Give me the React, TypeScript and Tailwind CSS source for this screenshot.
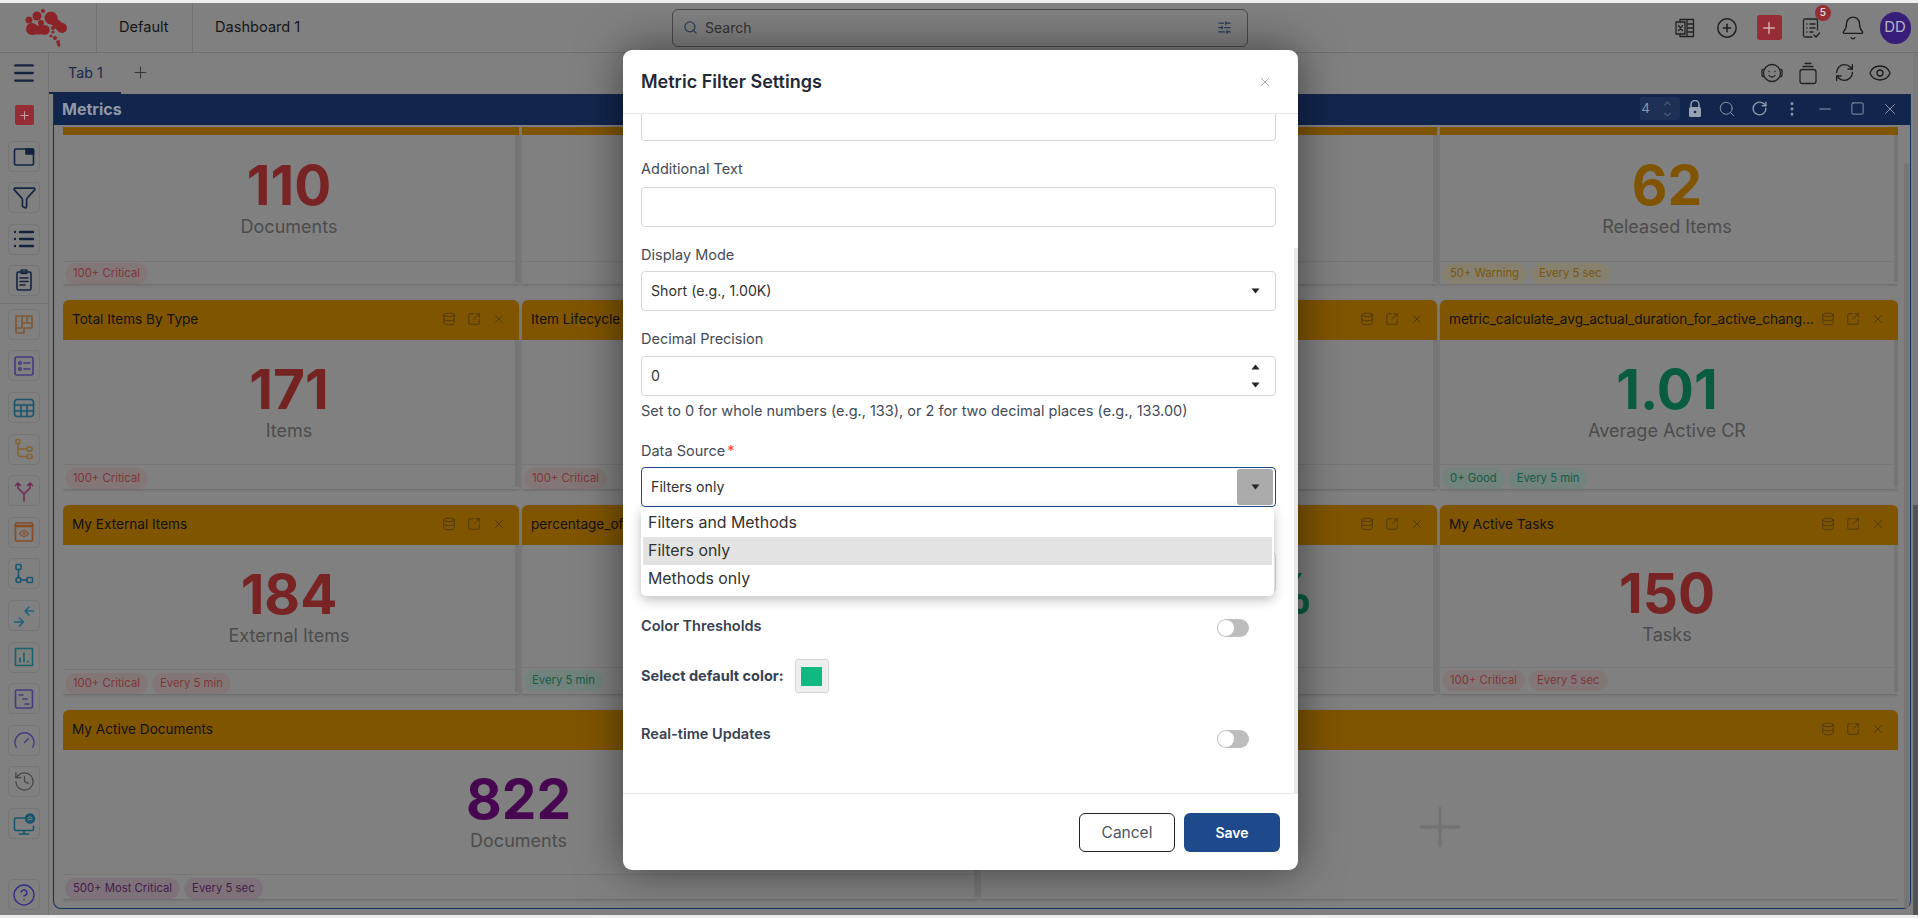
import React from "react";
import { Search, SlidersHorizontal, CirclePlus, Bell, Plus, RefreshCw, Eye, ChevronUp, ChevronDown, RotateCw, EllipsisVertical, Minus, Square, X, Database, SquareArrowOutUpRight, Gauge, History, CircleHelp, Menu, Funnel, List } from "lucide-react";

type IconProps = { c: string; children: React.ReactNode; size?: number };
const G = ({ c, children, size = 24 }: IconProps) => (
  <svg width={size} height={size} viewBox="0 0 24 24" fill="none" stroke={c} strokeWidth="1.6" strokeLinecap="round" strokeLinejoin="round">{children}</svg>
);

const NAVY = "#14233f";
const ORG = "#7e5733";
const PUR = "#473a80";
const TEAL = "#19566e";

const sideTop: React.ReactNode[] = [
  <G c={NAVY}><rect x="2.5" y="4" width="19" height="16" rx="1.5" /><rect x="14" y="4" width="7.5" height="5" fill={NAVY} /></G>,
  <Funnel size={25} color={NAVY} strokeWidth={1.6} />,
  <List size={24} color={NAVY} strokeWidth={2.4} />,
  <G c={NAVY}><rect x="5" y="4" width="14" height="18" rx="1.5" /><rect x="9" y="2" width="6" height="3.5" rx="1" /><path d="M8 10h8M8 13.5h8M8 17h5" /></G>,
];

const sideBottom: React.ReactNode[] = [
  <G c={ORG}><path d="M4 4h16v12h-8v5H5a1 1 0 0 1-1-1z" /><path d="M10 4v12H4M10 11h10M15 4v7" /></G>,
  <G c={PUR}><rect x="3" y="3" width="18" height="18" rx="2" /><circle cx="8" cy="9" r="1.3" /><circle cx="8" cy="15" r="1.3" /><path d="M12 9h6M12 15h6" /></G>,
  <G c={TEAL}><rect x="2.5" y="3.5" width="19" height="17" rx="3" /><path d="M2.5 9h19M2.5 15h19M9 9v11.5M15 9v11.5" /></G>,
  <G c="#84632f"><rect x="4" y="2.5" width="4" height="4" rx="1" /><rect x="15" y="10" width="5" height="4" rx="1" /><rect x="15" y="17.5" width="5" height="4" rx="1" /><path d="M6 6.5V17a2.500 2.500 0 0 0 2.500 2.500H15M6 12h9" /></G>,
  <G c="#722a52"><path d="M12 22v-7L6 9V4M12 15l6-6V4M3.500 6.500 6 4l2.500 2.500M15.500 6.500 18 4l2.500 2.500" /></G>,
  <G c="#884b25"><rect x="3.500" y="3" width="17" height="18" rx="1" /><path d="M3.500 6h17" strokeWidth="2.600" /><path d="M7.500 13.500s2-3 4.500-3 4.500 3 4.500 3-2 3-4.500 3-4.500-3-4.500-3z" strokeWidth="1.200" /><circle cx="12" cy="13.500" r="1" strokeWidth="1" /></G>,
  <G c={TEAL}><rect x="4" y="2.500" width="5" height="5" rx="1" /><circle cx="6.500" cy="18" r="2.500" /><rect x="15" y="15.500" width="5.500" height="5" rx="1" /><path d="M6.500 7.500v8M9 18h6" /></G>,
  <G c="#1f627f"><path d="M2.500 18H11M7.500 14l4 4-4 4M21.500 7H13M17 3l-4 4 4 4" /></G>,
  <G c="#19626a"><rect x="3.500" y="3.500" width="17" height="17" /><path d="M8 17v-4M12 17V8M16 17v-1" /></G>,
  <G c={PUR}><rect x="3.500" y="3" width="17" height="18" rx="1.500" /><path d="M7 8h4M11 12h4M13 17h4" /></G>,
  <Gauge size={23} color={PUR} strokeWidth={1.5} />,
  <History size={23} color="#444" strokeWidth={1.3} />,
  <G c={TEAL}><path d="M15 6H4a1.500 1.500 0 0 0-1.500 1.500V17A1.500 1.500 0 0 0 4 18.500h16a1.500 1.500 0 0 0 1.500-1.500v-3M12 18.500V22M7.500 22h9" /><circle cx="18" cy="6.500" r="4.500" fill="#19566e" /><path d="M16 6l2-1.500 2 1.500M16 8l2-1 2 1" stroke="#808080" strokeWidth="1" /></G>,
];

type Tone = "red" | "green" | "orange" | "purple";
const toneClass: Record<Tone, string> = {
  red: "bg-[#827676] text-[#803636]",
  green: "bg-[#72827d] text-[#145d46]",
  orange: "bg-[#86806f] text-[#7a570e]",
  purple: "bg-[#7d727a] text-[#471a4a]",
};

type Card = {
  title?: string;
  value?: string;
  label?: string;
  color?: string;
  tone?: Tone;
  badges?: string[];
  footer?: string;
  span?: boolean;
  plus?: boolean;
  noBar?: boolean;
  up?: boolean;
};

const cards: Card[] = [
  { value: "110", label: "Documents", color: "text-[#782424]", tone: "red", badges: ["100+ Critical"], footer: "h-[23px]" },
  { footer: "h-[23px]" },
  { footer: "h-[23px]" },
  { value: "62", label: "Released Items", color: "text-[#815500]", tone: "orange", badges: ["50+ Warning", "Every 5 sec"], footer: "h-[23px]" },
  { title: "Total Items By Type", value: "171", label: "Items", color: "text-[#742222]", tone: "red", badges: ["100+ Critical"] },
  { title: "Item Lifecycle", tone: "red", badges: ["100+ Critical"] },
  {},
  { title: "metric_calculate_avg_actual_duration_for_active_change_requests", value: "1.01", label: "Average Active CR", color: "text-[#095c3f]", tone: "green", badges: ["0+ Good", "Every 5 min"] },
  { title: "My External Items", value: "184", label: "External Items", color: "text-[#782424]", tone: "red", badges: ["100+ Critical", "Every 5 min"] },
  { title: "percentage_of_items", tone: "green", badges: ["Every 5 min"], up: true },
  { value: "33.33%", color: "text-[#095c3f]", up: true },
  { title: "My Active Tasks", value: "150", label: "Tasks", color: "text-[#782424]", tone: "red", badges: ["100+ Critical", "Every 5 sec"], up: true },
  { title: "My Active Documents", value: "822", label: "Documents", color: "text-[#460750]", tone: "purple", badges: ["500+ Most Critical", "Every 5 sec"], span: true },
  { span: true, plus: true, noBar: true },
];

function MetricCard({ card }: { card: Card }) {
  const footerH = card.footer ?? (card.up ? "h-[27px] pb-[3px]" : "h-[25px]");
  return (
    <div className={`flex h-[189px] flex-col overflow-hidden rounded-t-md shadow-[0_1px_3px_rgba(0,0,0,0.2)] ${card.span ? "col-span-2" : ""}`}>
      <div className="flex h-[40px] shrink-0 items-center bg-[#805500] pb-[2px] pl-[9px] pr-[13px] text-[13.600px] text-[#111]">
        <span className="min-w-0 flex-1 truncate">{card.title}</span>
        <div className="ml-[2px] flex w-[64px] shrink-0 items-center justify-between text-[#4a3710]">
          <Database size={14} strokeWidth={1.5} />
          <SquareArrowOutUpRight size={14} strokeWidth={1.5} />
          <X size={14} strokeWidth={1.5} />
        </div>
      </div>
      <div className="flex min-h-0 flex-1">
        <div className="flex min-w-0 flex-1 flex-col">
          <div className="flex min-h-0 flex-1 flex-col items-center justify-center">
            {card.plus ? (
              <svg width="40" height="40" viewBox="0 0 40 40" className="mt-[5px]" stroke="#727272" strokeWidth="3"><path d="M20 0v40M0 20h40" /></svg>
            ) : (
              <>
                <div className={`h-[60px] text-[55px] font-bold leading-[55px] ${card.color ?? ""}`}>{card.value}</div>
                <div className="h-[20px] text-[18px] leading-[18px] text-[#4c4c4c]">{card.label}</div>
              </>
            )}
          </div>
          {!card.plus && (
            <div className={`flex shrink-0 items-end gap-[4px] border-t border-[#767676] pl-[2px] ${footerH}`}>
              {card.badges?.map((b) => (
                <span key={b} className={`flex h-[21px] items-center rounded-full px-[8px] text-[11.300px] ${toneClass[card.tone ?? "red"]}`}>{b}</span>
              ))}
            </div>
          )}
        </div>
        {!card.noBar && <div className="mb-[2px] w-[4px] shrink-0 bg-[#757575]" />}
      </div>
    </div>
  );
}

const Label = ({ children, className = "" }: { children: React.ReactNode; className?: string }) => (
  <div className={`h-[20px] text-[14.500px] leading-[20px] ${className}`}>{children}</div>
);

const Caret = () => <svg width="9" height="6" viewBox="0 0 9 6"><path d="M0.500 0.500h8L4.500 5.500z" fill="#222" /></svg>;
const Toggle = ({ className = "" }: { className?: string }) => (
  <div className={`flex h-[18px] w-[32px] shrink-0 items-center rounded-full bg-[#bdbdbd] pl-[1px] ${className}`}>
    <div className="h-[16px] w-[16px] rounded-full bg-white" />
  </div>
);

const Field = ({ children, className = "" }: { children?: React.ReactNode; className?: string }) => (
  <div className={`flex h-[40px] items-center rounded-[4px] border bg-white pl-[9px] text-[14.200px] text-[#333] ${className}`}>{children}</div>
);

const GRAY = "border-[#d4d6da] pr-[15px]";
const LBL = "text-[#434b58]";
const STRONG = "text-[#374151]";

function Modal() {
  return (
    <div className="absolute left-[623px] top-[50px] flex h-[820px] w-[675px] flex-col overflow-hidden rounded-[9px] bg-white shadow-[0_0_45px_rgba(0,0,0,0.5)]">
      <div className="flex h-[64px] shrink-0 items-center justify-between border-b border-[#e5e7eb] pl-[18px] pr-[26px]">
        <span className="text-[18px] font-semibold text-[#1f2937]">Metric Filter Settings</span>
        <X size={14} color="#9ca3af" strokeWidth={1.500} />
      </div>
      <div className="relative flex min-h-0 flex-1 overflow-hidden border-b border-[#e5e7eb]">
        <div className="min-w-0 flex-1 pl-[18px] pr-[18px]">
          <Field className={`-mt-[13px] ${GRAY}`} />
          <Label className={`mt-[18px] ${LBL}`}>Additional Text</Label>
          <Field className={`mt-[8px] ${GRAY}`} />
          <Label className={`mt-[18px] ${LBL}`}>Display Mode</Label>
          <Field className={`mt-[6px] justify-between ${GRAY}`}>
            <span>Short (e.g., 1.00K)</span>
            <Caret />
          </Field>
          <Label className={`mt-[18px] ${LBL}`}>Decimal Precision</Label>
          <Field className={`mt-[7px] justify-between ${GRAY}`}>
            <span>0</span>
            <div className="flex flex-col gap-[12px]">
              <div className="rotate-180"><Caret /></div>
              <Caret />
            </div>
          </Field>
          <Label className={`mt-[5px] whitespace-nowrap ${LBL}`}>Set to 0 for whole numbers (e.g., 133), or 2 for two decimal places (e.g., 133.00)</Label>
          <Label className={`mt-[20px] ${LBL}`}>Data Source<span className="ml-[2px] text-[#ef4444]">*</span></Label>
          <Field className="mt-[6px] justify-between border-[#1e4a8c] pr-[2px]">
            <span>Filters only</span>
            <div className="flex h-[36px] w-[36px] items-center justify-center rounded-[3px] bg-[#ababab]"><Caret /></div>
          </Field>
          <Field className={`mt-[45px] ${GRAY}`} />
          <div className="mt-[25px] flex items-start justify-between pr-[27px]">
            <Label className={`-translate-y-[1px] font-semibold ${STRONG}`}>Color Thresholds</Label>
            <Toggle className="mt-[2px]" />
          </div>
          <div className="mt-[22px] flex items-center gap-[11px]">
            <Label className={`font-bold ${STRONG}`}>Select default color:</Label>
            <div className="flex h-[34px] w-[34px] items-center justify-center rounded-[3px] border border-[#d4d4d4] bg-[#efefef]">
              <div className="h-[19px] w-[21px] bg-[#10b981]" />
            </div>
          </div>
          <div className="mt-[31px] flex items-start justify-between pr-[27px]">
            <Label className={`font-semibold ${STRONG}`}>Real-time Updates</Label>
            <Toggle className="mt-[6px]" />
          </div>
        </div>
        <div className="mt-[134px] w-[4px] shrink-0 bg-[#e8e8e8]" />
        <div className="absolute left-[18px] top-[393px] h-[89px] w-[633px] rounded-[5px] bg-white p-[2px] text-[15.900px] text-[#333] shadow-[0_4px_12px_rgba(0,0,0,0.25)]">
          <div className="flex h-[28px] items-center pl-[5px]">Filters and Methods</div>
          <div className="flex h-[28px] items-center bg-[#e3e3e3] pl-[5px]">Filters only</div>
          <div className="flex h-[28px] items-center pl-[5px]">Methods only</div>
        </div>
      </div>
      <div className="flex h-[76px] shrink-0 items-start justify-end gap-[9px] pr-[18px] pt-[19px]">
        <button className="h-[39px] w-[96px] rounded-[6px] border border-[#222] text-[15.500px] text-[#4b5563]">Cancel</button>
        <button className="h-[39px] w-[96px] rounded-[6px] bg-[#1e4a8c] text-[14px] font-semibold text-white">Save</button>
      </div>
    </div>
  );
}

export default function App() {
  return (
    <div className="relative h-[918px] w-full overflow-hidden bg-[#eeeeee] pb-[3px] pt-[3px] font-['Inter',sans-serif]">
      <div className="flex h-[912px] flex-col bg-[#808080]">
        <header className="flex h-[50px] shrink-0 items-center border-b border-[#6f6f6f] text-[14.600px] text-[#161616]">
          <div className="flex h-full w-[97px] shrink-0 items-center justify-center border-r border-[#727272]">
            <svg width="56" height="46" viewBox="20 5 56 46" fill="#8a2428">
              <circle cx="51" cy="18" r="6.500" /><circle cx="62" cy="28" r="5" /><path d="M47 20l5-5 13 10-7 6z" /><circle cx="32" cy="29" r="6" /><circle cx="45" cy="30" r="4.800" /><path d="M32 25.500h13v9H32z" /><circle cx="29" cy="20" r="3.500" /><circle cx="37" cy="16" r="4.500" /><circle cx="41" cy="23" r="3" /><circle cx="43" cy="11" r="2" /><circle cx="53" cy="28" r="2" /><circle cx="53" cy="32" r="1.600" /><circle cx="51" cy="36" r="1.500" /><circle cx="55" cy="38" r="2" /><path d="M56 41l3.500-1 1 6-2.500 1z" />
            </svg>
          </div>
          <div className="flex h-full w-[96px] shrink-0 items-center border-r border-[#727272] pl-[22px]">Default</div>
          <div className="flex h-full w-[479px] shrink-0 items-center pl-[22px]">Dashboard 1</div>
          <div className="flex h-[38px] w-[576px] shrink-0 items-center rounded-[6px] border border-[#4a4a4a] pl-[10px] pr-[15px] text-[14px] text-[#333]">
            <Search size={15} color="#2b3a55" />
            <span className="ml-[7px] flex-1">Search</span>
            <SlidersHorizontal size={15} color="#2b3a55" />
          </div>
          <div className="ml-auto flex items-center pr-[2px]">
            <div className="flex w-[42px] justify-center">
              <G c="#222"><path d="M7 6V3.500h13.500v17H7V18M14 3.500v17M14 8h6.500M14 12h6.500M14 16h6.500" strokeWidth="1.300" /><rect x="3" y="6" width="9" height="12" strokeWidth="1.300" /><path d="m5.500 9.500 4 5M9.500 9.500l-4 5" strokeWidth="1.300" /></G>
            </div>
            <div className="flex w-[42px] justify-center"><CirclePlus size={22} color="#1c1c1c" strokeWidth={1.600} /></div>
            <div className="flex w-[42px] justify-center">
              <div className="flex h-[25px] w-[25px] items-center justify-center rounded-[3px] bg-[#962d35]"><Plus size={18} color="#d0aeae" strokeWidth={2} /></div>
            </div>
            <div className="relative flex w-[42px] justify-center">
              <G c="#222"><path d="M13 21H6a1.500 1.500 0 0 1-1.500-1.500v-15A1.500 1.500 0 0 1 6 3h11a1.500 1.500 0 0 1 1.500 1.500V14" strokeWidth="1.300" /><path d="M8 8h.1M11 8h5M8 12h.1M11 12h5M8 16h.1M11 16h3M15 19l2 2 3.500-4" strokeWidth="1.300" /></G>
              <span className="absolute left-[25px] -top-[11px] flex h-[16px] w-[16px] items-center justify-center rounded-full bg-[#962d35] text-[10px] font-semibold text-[#d8d8d8]">5</span>
            </div>
            <div className="flex w-[42px] justify-center"><Bell size={26} color="#1c1c1c" strokeWidth={1.200} /></div>
            <div className="flex w-[42px] justify-center">
              <div className="flex h-[32px] w-[31px] items-center justify-center rounded-full bg-[#381e78] text-[15px] text-[#b5b5c5]">DD</div>
            </div>
          </div>
        </header>

        <div className="flex min-h-0 flex-1">
          <aside className="flex w-[49px] shrink-0 flex-col items-center border-r border-[#727272] pb-[5px]">
            <div className="flex h-[40px] shrink-0 items-center justify-center"><Menu size={26} color={NAVY} strokeWidth={2.200} /></div>
            <div className="mt-[12px] flex h-[20px] w-[19px] shrink-0 items-center justify-center rounded-[2px] bg-[#962d35]"><Plus size={13} color="#c8a0a0" strokeWidth={1.800} /></div>
            <div className="mt-[16px] flex flex-col gap-[10.300px]">
              {sideTop.map((icon, i) => (
                <div key={i} className="flex h-[31px] w-[32px] items-center justify-center rounded-[5px] border border-[#767676]">{icon}</div>
              ))}
            </div>
            <div className="mt-[7px] h-px w-full bg-[#727272]" />
            <div className="mt-[5px] flex flex-col gap-[10.600px]">
              {sideBottom.map((icon, i) => (
                <div key={i} className="flex h-[31px] w-[32px] items-center justify-center rounded-[5px] border border-[#767676]">{icon}</div>
              ))}
            </div>
            <div className="mt-auto flex h-[31px] w-[32px] items-center justify-center rounded-[5px] border border-[#767676]">
              <CircleHelp size={24} color="#342d86" strokeWidth={1.400} />
            </div>
          </aside>

          <main className="flex min-w-0 flex-1 flex-col">
            <div className="flex h-[41px] shrink-0 items-center">
              <div className="flex h-full w-[72px] items-center border-b-[2px] border-[#16264a] pl-[19px] text-[14.300px] text-[#1b2a4c]">Tab 1</div>
              <Plus size={19} color="#333" strokeWidth={1.200} className="ml-[10px] -mt-[3px]" />
              <div className="ml-auto flex items-center pb-[2px] pr-[15px]">
                <div className="flex w-[36px] justify-center">
                  <G c="#222"><circle cx="12" cy="12" r="8.500" strokeWidth="1.300" /><path d="M3.500 8.500H3a1 1 0 0 0-1 1v5a1 1 0 0 0 1 1h.5M20.500 8.500h.5a1 1 0 0 1 1 1v5a1 1 0 0 1-1 1h-.5M9 10.500h.1M15 10.500h.1M9 14.500s1 1.500 3 1.500 3-1.500 3-1.500" strokeWidth="1.300" /></G>
                </div>
                <div className="flex w-[36px] justify-center">
                  <G c="#222"><rect x="4" y="8.500" width="16" height="14" rx="2.500" strokeWidth="1.300" /><path d="M7 5.500h10M9 2.500h6" strokeWidth="1.300" /></G>
                </div>
                <div className="flex w-[36px] justify-center"><RefreshCw size={21} color="#1c1c1c" strokeWidth={1.500} /></div>
                <div className="flex w-[36px] justify-center"><Eye size={24} color="#1c1c1c" strokeWidth={1.300} /></div>
              </div>
            </div>

            <section className="ml-[4px] mr-[2px] flex h-[815px] shrink-0 flex-col rounded-b-lg border-x border-b border-[#16305a]">
              <div className="flex h-[31px] shrink-0 items-center bg-[#12264d] pb-[2px] pl-[8px] text-[#8f98aa]">
                <span className="text-[16px] font-bold">Metrics</span>
                <div className="ml-auto flex items-center pr-[4px]">
                  <div className="mr-[-1px] flex h-[23px] w-[40px] items-center justify-between rounded-[3px] bg-[#1d3156] pl-[2px] pr-[7px] text-[13px] text-[#8f97a8]">
                    <span>4</span>
                    <div className="flex flex-col text-[#4f5a72]">
                      <ChevronUp size={11} strokeWidth={3} />
                      <ChevronDown size={11} strokeWidth={3} />
                    </div>
                  </div>
                  <div className="flex w-[32.500px] justify-center">
                    <svg width="14" height="18" viewBox="0 0 14 18" fill="#98a0b2"><rect x="1" y="7" width="12" height="10" rx="1.500" /><path d="M3 7V4.500a4 4 0 0 1 8 0V7" fill="none" stroke="#98a0b2" strokeWidth="1.500" /><circle cx="7" cy="12" r="1.300" fill="#12264d" /></svg>
                  </div>
                  <div className="flex w-[32.500px] justify-center"><Search size={18} strokeWidth={1.300} /></div>
                  <div className="flex w-[32.500px] justify-center"><RotateCw size={17} strokeWidth={2} /></div>
                  <div className="flex w-[32.500px] justify-center"><EllipsisVertical size={18} strokeWidth={1.800} /></div>
                  <div className="flex w-[32.500px] justify-center"><Minus size={18} strokeWidth={1.500} /></div>
                  <div className="flex w-[32.500px] justify-center"><Square size={15} strokeWidth={1.500} /></div>
                  <div className="flex w-[32.500px] justify-center"><X size={18} strokeWidth={1.300} /></div>
                </div>
              </div>
              <div className="flex min-h-0 flex-1 pl-[9px]">
                <div className="mt-[2px] min-w-0 flex-1 overflow-hidden">
                  <div className="-mt-[32px] grid grid-cols-[456px_456px_456px_458px] gap-x-[3px] gap-y-[16px] pb-[3px]">
                    {cards.map((c, i) => <MetricCard key={i} card={c} />)}
                  </div>
                </div>
                <div className="ml-[6px] mr-px mt-[38px] w-[5px] shrink-0 rounded-full bg-[#767676]" />
              </div>
            </section>
          </main>

          <div className="flex w-[5px] shrink-0 flex-col">
            <div className="h-[452px] shrink-0 bg-[#797979]" />
            <div className="flex-1 bg-[#545454]" />
          </div>
        </div>
      </div>
      <Modal />
    </div>
  );
}
